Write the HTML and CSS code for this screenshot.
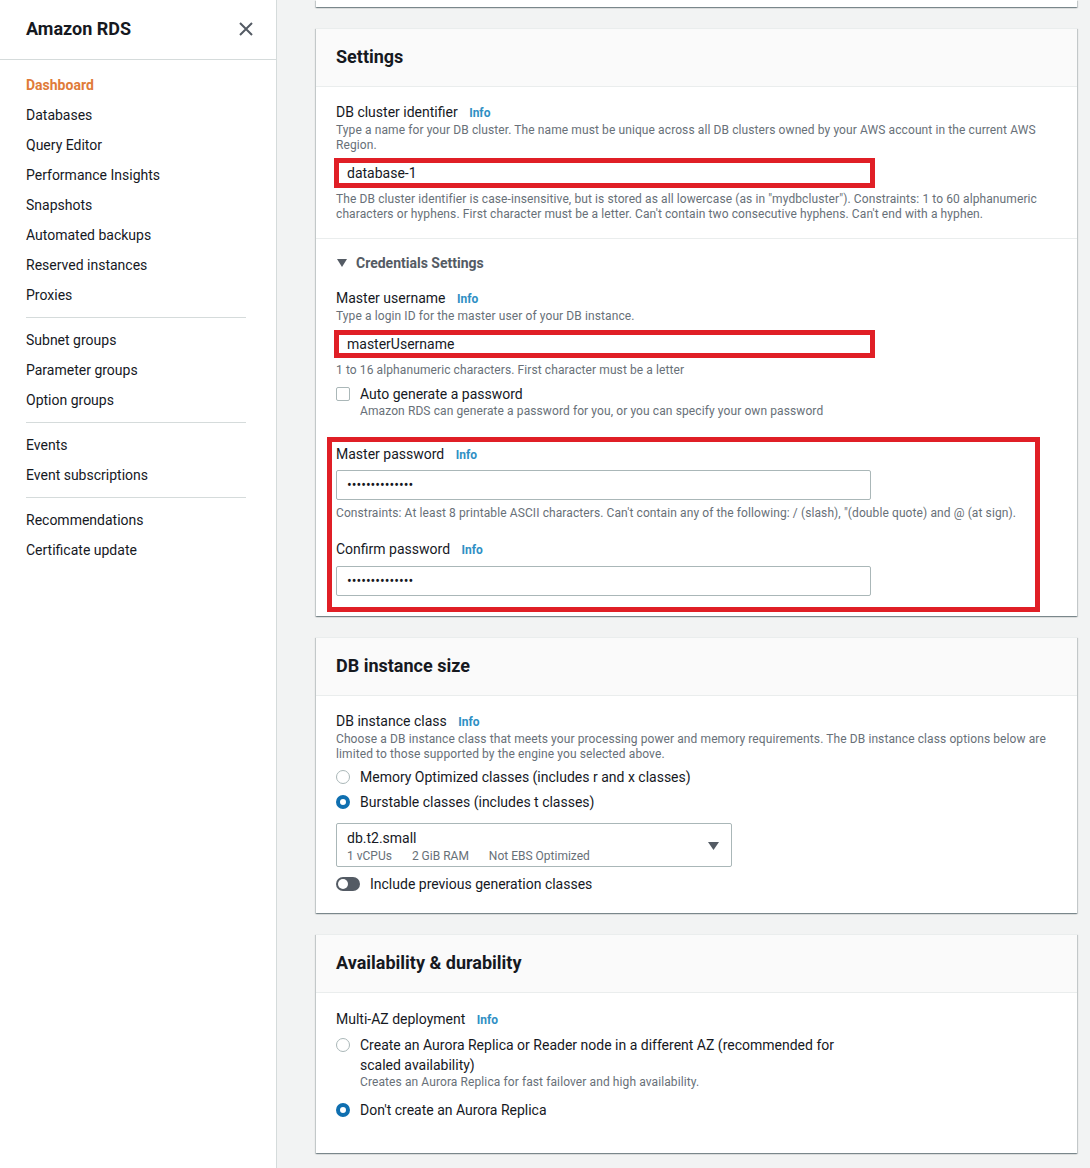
FILE: index.html
```html
<!DOCTYPE html>
<html lang="en">
<head>
    <meta charset="UTF-8">
    <meta name="viewport" content="width=device-width, initial-scale=1.0">
    <title>Amazon RDS - Create database</title>
    <link rel="stylesheet" href="styles.css">
</head>
<body>
    <div class="page">
        <!-- Side navigation -->
        <nav class="sidebar">
            <div class="sidebar-header">
                <span class="sidebar-title">Amazon RDS</span>
                <button class="sidebar-close" aria-label="Close">
                    <svg width="14" height="14" viewBox="0 0 14 14">
                        <path d="M1 1 L13 13 M13 1 L1 13" stroke="#545b64" stroke-width="2" fill="none"/>
                    </svg>
                </button>
            </div>
            <ul class="nav-list">
                <li class="nav-item active">Dashboard</li>
                <li class="nav-item">Databases</li>
                <li class="nav-item">Query Editor</li>
                <li class="nav-item">Performance Insights</li>
                <li class="nav-item">Snapshots</li>
                <li class="nav-item">Automated backups</li>
                <li class="nav-item">Reserved instances</li>
                <li class="nav-item">Proxies</li>
            </ul>
            <hr class="nav-divider">
            <ul class="nav-list">
                <li class="nav-item">Subnet groups</li>
                <li class="nav-item">Parameter groups</li>
                <li class="nav-item">Option groups</li>
            </ul>
            <hr class="nav-divider">
            <ul class="nav-list">
                <li class="nav-item">Events</li>
                <li class="nav-item">Event subscriptions</li>
            </ul>
            <hr class="nav-divider">
            <ul class="nav-list">
                <li class="nav-item">Recommendations</li>
                <li class="nav-item">Certificate update</li>
            </ul>
        </nav>

        <!-- Main form -->
        <main class="content">
            <div class="card card-tail"></div>

            <!-- Settings -->
            <section class="card">
                <div class="card-header"><h2>Settings</h2></div>
                <div class="card-body">
                    <div class="field-label">DB cluster identifier <a class="info">Info</a></div>
                    <div class="desc">Type a name for your DB cluster. The name must be unique across all DB clusters owned by your AWS account in the current AWS Region.</div>
                    <input class="input input-marked" type="text" value="database-1" readonly>
                    <div class="desc hint">The DB cluster identifier is case-insensitive, but is stored as all lowercase (as in "mydbcluster"). Constraints: 1 to 60 alphanumeric characters or hyphens. First character must be a letter. Can't contain two consecutive hyphens. Can't end with a hyphen.</div>
                </div>
                <div class="card-section">
                    <div class="expander">
                        <svg width="10" height="8" viewBox="0 0 10 8"><polygon points="0,0 10,0 5,8" fill="#545b64"/></svg>
                        Credentials Settings
                    </div>
                    <div class="field-label spaced">Master username <a class="info">Info</a></div>
                    <div class="desc">Type a login ID for the master user of your DB instance.</div>
                    <input class="input input-marked input-short" type="text" value="masterUsername" readonly>
                    <div class="desc hint-tight">1 to 16 alphanumeric characters. First character must be a letter</div>
                    <div class="check-row">
                        <span class="checkbox"></span>
                        <span>Auto generate a password</span>
                    </div>
                    <div class="desc option-desc">Amazon RDS can generate a password for you, or you can specify your own password</div>

                    <div class="marked-group">
                        <div class="field-label">Master password <a class="info">Info</a></div>
                        <input class="input" type="text" value="••••••••••••••" readonly>
                        <div class="desc hint-wide">Constraints: At least 8 printable ASCII characters. Can't contain any of the following: / (slash), "(double quote) and @ (at sign).</div>
                        <div class="field-label confirm">Confirm password <a class="info">Info</a></div>
                        <input class="input input-confirm" type="text" value="••••••••••••••" readonly>
                    </div>
                </div>
            </section>

            <!-- DB instance size -->
            <section class="card">
                <div class="card-header"><h2>DB instance size</h2></div>
                <div class="card-body size-body">
                    <div class="field-label">DB instance class <a class="info">Info</a></div>
                    <div class="desc">Choose a DB instance class that meets your processing power and memory requirements. The DB instance class options below are limited to those supported by the engine you selected above.</div>
                    <div class="radio-row">
                        <span class="radio"></span>
                        <span>Memory Optimized classes (includes r and x classes)</span>
                    </div>
                    <div class="radio-row">
                        <span class="radio checked"></span>
                        <span>Burstable classes (includes t classes)</span>
                    </div>
                    <div class="select">
                        <div class="select-value">
                            <div class="select-main">db.t2.small</div>
                            <div class="select-meta">
                                <span>1 vCPUs</span>
                                <span>2 GiB RAM</span>
                                <span>Not EBS Optimized</span>
                            </div>
                        </div>
                        <svg width="11" height="8" viewBox="0 0 11 8"><polygon points="0,0 11,0 5.5,8" fill="#545b64"/></svg>
                    </div>
                    <div class="toggle-row">
                        <span class="toggle"></span>
                        <span>Include previous generation classes</span>
                    </div>
                </div>
            </section>

            <!-- Availability & durability -->
            <section class="card">
                <div class="card-header"><h2>Availability &amp; durability</h2></div>
                <div class="card-body avail-body">
                    <div class="field-label">Multi-AZ deployment <a class="info">Info</a></div>
                    <div class="field-narrow">
                        <div class="radio-row">
                            <span class="radio"></span>
                            <span>Create an Aurora Replica or Reader node in a different AZ (recommended for scaled availability)</span>
                        </div>
                        <div class="desc option-desc">Creates an Aurora Replica for fast failover and high availability.</div>
                        <div class="radio-row second">
                            <span class="radio checked"></span>
                            <span>Don't create an Aurora Replica</span>
                        </div>
                    </div>
                </div>
            </section>
        </main>
    </div>
</body>
</html>
```

FILE: styles.css
```css
/* Amazon RDS create database form */

* {
    box-sizing: border-box;
}

body {
    margin: 0;
    font-family: Roboto, "Liberation Sans", Arial, sans-serif;
    font-size: 14px;
    color: #16191f;
    background: #f2f3f3;
}

.page {
    display: flex;
    min-height: 100vh;
}

/* Sidebar */
.sidebar {
    width: 277px;
    flex-shrink: 0;
    background: #fff;
    border-right: 1px solid #d5dbdb;
}

.sidebar-header {
    height: 60px;
    display: flex;
    align-items: center;
    justify-content: space-between;
    padding: 0 23px 2px 26px;
    border-bottom: 1px solid #d5dbdb;
}

.sidebar-title {
    font-size: 18px;
    font-weight: bold;
}

.sidebar-close {
    background: none;
    border: none;
    padding: 0;
    display: flex;
    cursor: pointer;
}

.nav-list {
    list-style: none;
    margin: 0;
    padding: 0 0 0 26px;
}

.nav-list:first-of-type {
    padding-top: 10px;
}

.nav-item {
    line-height: 30px;
    color: #16191f;
}

.nav-item.active {
    color: #e07b39;
    font-weight: bold;
}

.nav-divider {
    border: none;
    border-top: 1px solid #d5dbdb;
    margin: 7px 30px 7px 26px;
}

/* Main area */
.content {
    flex: 1;
    padding: 0 13px 0 39px;
}

.card {
    background: #fff;
    border-top: 1px solid #eaeded;
    box-shadow: 0 1px 1px 0 rgba(0, 28, 36, 0.3), 1px 1px 1px 0 rgba(0, 28, 36, 0.15), -1px 1px 1px 0 rgba(0, 28, 36, 0.15);
    margin-bottom: 21px;
}

.card-tail {
    height: 7px;
    border-top: none;
}

.card-header {
    background: #fafafa;
    border-bottom: 1px solid #eaeded;
    padding: 17px 20px 18px;
}

.card-header h2 {
    margin: 0;
    font-size: 18px;
    line-height: 22px;
    font-weight: bold;
}

.card-body {
    padding: 15px 20px 16px;
}

.card-section {
    border-top: 1px solid #eaeded;
    padding: 14px 20px 4px;
}

.field-label {
    height: 21px;
    line-height: 21px;
}

.field-label.spaced {
    margin-top: 15px;
}

.field-label.confirm {
    margin-top: 18px;
}

.info {
    margin-left: 8px;
    font-size: 12px;
    font-weight: bold;
    color: #2f8fc4;
    cursor: pointer;
}

.desc {
    font-size: 12px;
    line-height: 15px;
    letter-spacing: 0.1px;
    color: #687078;
}

.hint {
    margin-top: 4px;
}

.hint-tight {
    margin-top: 5px;
}

.hint-wide {
    margin-top: 6px;
}

.option-desc {
    padding-left: 24px;
}

/* Inputs */
.input {
    display: block;
    width: 535px;
    height: 30px;
    margin-top: 5px;
    padding: 0 10px;
    border: 1px solid #aab7b8;
    border-radius: 2px;
    font-family: inherit;
    font-size: 14px;
    color: #16191f;
    background: #fff;
    outline: none;
}

.input-confirm {
    margin-top: 6px;
}

.input-marked {
    width: 541px;
    margin-left: -2px;
    padding-left: 8px;
    border: 5px solid #e01f26;
    border-radius: 0;
}

.input-short {
    height: 28px;
    margin-top: 6px;
}

/* Red annotation around password fields */
.marked-group {
    width: 713px;
    margin: 18px 0 0 -9px;
    padding: 2px 4px 11px 4px;
    border: 5px solid #e01f26;
}

.expander {
    display: flex;
    align-items: center;
    gap: 9px;
    line-height: 20px;
    font-weight: bold;
    color: #545b64;
    padding-left: 1px;
}

.check-row,
.radio-row,
.toggle-row {
    display: flex;
    align-items: flex-start;
    gap: 10px;
    line-height: 20px;
}

.check-row {
    margin-top: 6px;
}

.checkbox {
    width: 14px;
    height: 14px;
    margin-top: 3px;
    border: 1px solid #aab7b8;
    border-radius: 2px;
    flex-shrink: 0;
}

.radio {
    width: 14px;
    height: 14px;
    margin-top: 3px;
    border: 1px solid #aab7b8;
    border-radius: 50%;
    flex-shrink: 0;
    background: #fff;
}

.radio.checked {
    border: 4px solid #0f6fb0;
}

.radio-row {
    margin-top: 5px;
}

/* DB instance size */
.size-body {
    padding-bottom: 19px;
}

.select {
    display: flex;
    align-items: center;
    justify-content: space-between;
    width: 396px;
    height: 44px;
    margin-top: 11px;
    padding: 3px 12px 1px 10px;
    border: 1px solid #aab7b8;
    border-radius: 2px;
}

.select-main {
    line-height: 20px;
}

.select-meta {
    display: flex;
    gap: 20px;
    font-size: 12px;
    line-height: 16px;
    color: #687078;
}

.toggle-row {
    margin-top: 7px;
}

.toggle {
    position: relative;
    width: 24px;
    height: 14px;
    margin-top: 3px;
    border-radius: 7px;
    background: #545b64;
    flex-shrink: 0;
}

.toggle::after {
    content: "";
    position: absolute;
    left: 2px;
    top: 2px;
    width: 10px;
    height: 10px;
    border-radius: 50%;
    background: #fff;
}

/* Availability */
.avail-body {
    padding: 16px 20px 33px;
}

.field-narrow {
    max-width: 530px;
}

.field-narrow .radio-row.second {
    margin-top: 10px;
}
```
